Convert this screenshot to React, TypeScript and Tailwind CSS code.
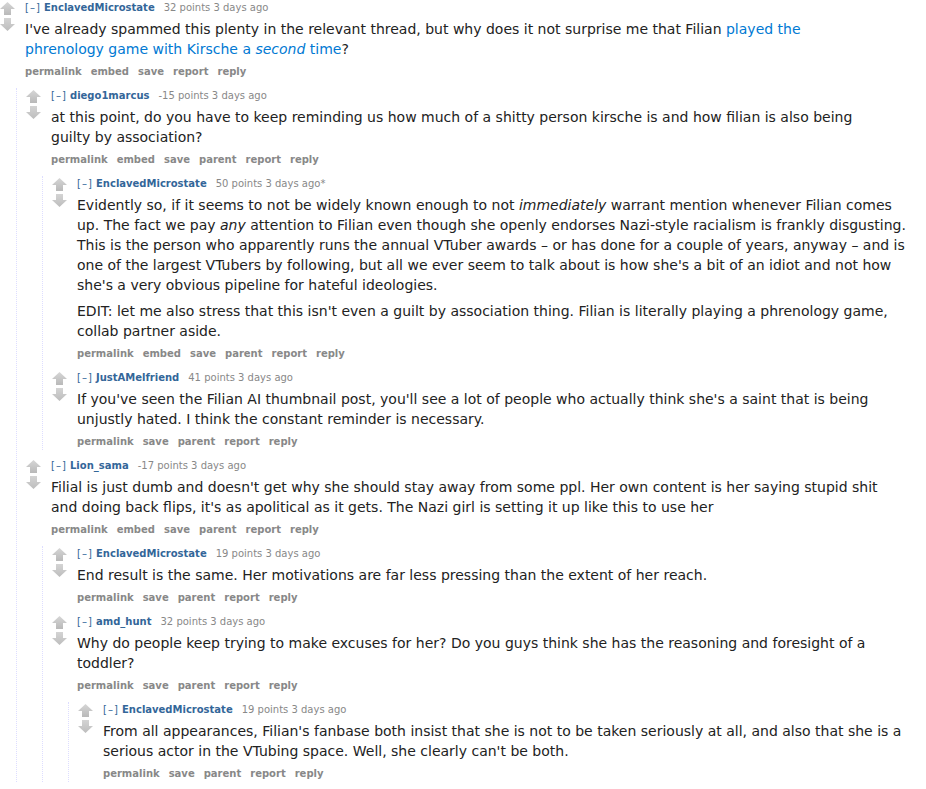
import type { ReactNode } from "react";

type CommentProps = {
  author: string;
  score: string;
  edited?: boolean;
  body: ReactNode;
  buttons: string[];
  nested?: boolean;
  children?: ReactNode;
};

const withParent = ["permalink", "embed", "save", "parent", "report", "reply"];
const noEmbed = ["permalink", "save", "parent", "report", "reply"];

function Arrow({ down }: { down?: boolean }) {
  return (
    <svg width="15" height="13" viewBox="0 0 15 13" className={down ? "rotate-180" : ""}>
      <defs>
        <linearGradient id={down ? "ga-down" : "ga-up"} x1="0" y1="0" x2="0" y2="1">
          <stop offset="0" stopColor={down ? "#bdbdbd" : "#d6d6d6"} />
          <stop offset="1" stopColor={down ? "#d4d4d4" : "#b9b9b9"} />
        </linearGradient>
      </defs>
      <polygon points="7.5,0 15,7 11,7 11,13 4,13 4,7 0,7" fill={`url(#${down ? "ga-down" : "ga-up"})`} />
    </svg>
  );
}

function Comment({ author, score, edited, body, buttons, nested, children }: CommentProps) {
  return (
    <div className={nested ? "ml-[9px] mt-[8px] first:mt-0" : ""}>
      <div className="flex">
        <div className="w-[25px] shrink-0 flex flex-col gap-[3px] pt-[2px]">
          <Arrow />
          <Arrow down />
        </div>
        <div className="min-w-0">
          <p className="text-[10px] leading-[16px] text-[#888] whitespace-nowrap">
            <span className="text-[#369] tracking-[1px]">[–]</span>{" "}
            <span className="font-bold text-[#369]">{author}</span>
            <span className="ml-[9px]">{score} points 3 days ago{edited ? "*" : ""}</span>
          </p>
          <div className="mt-[3px] text-[14px] leading-[20px] text-[#222] max-w-[840px] whitespace-nowrap">{body}</div>
          <ul className="mt-[5px] flex gap-[9px] text-[10px] leading-[16px] font-bold text-[#888]">
            {buttons.map((b) => (
              <li key={b}>{b}</li>
            ))}
          </ul>
        </div>
      </div>
      {children && (
        <div className="ml-[16px] mt-[8px] border-l border-dotted border-[#ddf]">{children}</div>
      )}
    </div>
  );
}

export default function App() {
  return (
    <div className="bg-white min-h-[789px] w-[926px] overflow-hidden" style={{ fontFamily: '"DejaVu Sans", Verdana, sans-serif' }}>
      <Comment
        author="EnclavedMicrostate"
        score="32"
        buttons={["permalink", "embed", "save", "report", "reply"]}
        body={
          <p>
            I've already spammed this plenty in the relevant thread, but why does it not surprise me that Filian{" "}
            <a className="text-[#0079d3]">played the</a>
            <br />
            <a className="text-[#0079d3]">
              phrenology game with Kirsche a <em>second</em> time
            </a>
            ?
          </p>
        }
      >
        <Comment
          nested
          author="diego1marcus"
          score="-15"
          buttons={withParent}
          body={
            <p>
              at this point, do you have to keep reminding us how much of a shitty person kirsche is and how filian is also being
              <br />
              guilty by association?
            </p>
          }
        >
          <Comment
            nested
            author="EnclavedMicrostate"
            score="50"
            edited
            buttons={withParent}
            body={
              <>
                <p>
                  Evidently so, if it seems to not be widely known enough to not <em>immediately</em> warrant mention whenever Filian comes
                  <br />
                  up. The fact we pay <em>any</em> attention to Filian even though she openly endorses Nazi-style racialism is frankly disgusting.
                  <br />
                  This is the person who apparently runs the annual VTuber awards – or has done for a couple of years, anyway – and is
                  <br />
                  one of the largest VTubers by following, but all we ever seem to talk about is how she's a bit of an idiot and not how
                  <br />
                  she's a very obvious pipeline for hateful ideologies.
                </p>
                <p className="mt-[6px]">
                  EDIT: let me also stress that this isn't even a guilt by association thing. Filian is literally playing a phrenology game,
                  <br />
                  collab partner aside.
                </p>
              </>
            }
          />
          <Comment
            nested
            author="JustAMelfriend"
            score="41"
            buttons={noEmbed}
            body={
              <p>
                If you've seen the Filian AI thumbnail post, you'll see a lot of people who actually think she's a saint that is being
                <br />
                unjustly hated. I think the constant reminder is necessary.
              </p>
            }
          />
        </Comment>
        <Comment
          nested
          author="Lion_sama"
          score="-17"
          buttons={withParent}
          body={
            <p>
              Filial is just dumb and doesn't get why she should stay away from some ppl. Her own content is her saying stupid shit
              <br />
              and doing back flips, it's as apolitical as it gets. The Nazi girl is setting it up like this to use her
            </p>
          }
        >
          <Comment
            nested
            author="EnclavedMicrostate"
            score="19"
            buttons={noEmbed}
            body={<p>End result is the same. Her motivations are far less pressing than the extent of her reach.</p>}
          />
          <Comment
            nested
            author="amd_hunt"
            score="32"
            buttons={noEmbed}
            body={
              <p>
                Why do people keep trying to make excuses for her? Do you guys think she has the reasoning and foresight of a
                <br />
                toddler?
              </p>
            }
          >
            <Comment
              nested
              author="EnclavedMicrostate"
              score="19"
              buttons={noEmbed}
              body={
                <p>
                  From all appearances, Filian's fanbase both insist that she is not to be taken seriously at all, and also that she is a
                  <br />
                  serious actor in the VTubing space. Well, she clearly can't be both.
                </p>
              }
            />
          </Comment>
        </Comment>
      </Comment>
    </div>
  );
}
